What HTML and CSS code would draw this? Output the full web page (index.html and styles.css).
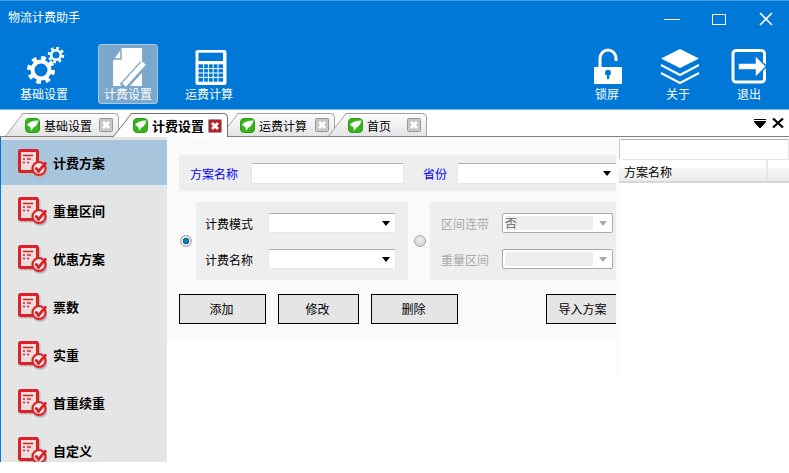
FILE: index.html
```html
<!DOCTYPE html>
<html lang="zh-CN">
<head>
    <meta charset="UTF-8">
    <title>物流计费助手</title>
    <link rel="stylesheet" href="styles.css">
</head>
<body>
<svg class="defs" width="0" height="0">
    <symbol id="tabLeaf" viewBox="0 0 15 15">
        <rect x="0.500" y="0.500" width="14" height="14" rx="3.500" fill="#37b31c" stroke="#2f9a16"/>
        <path d="M2 7C4.500 3.500 9 2.500 13.500 2.500C12.500 6.500 10.500 9 8.500 9.500L6 13L5.500 9.500C4.500 8.500 3 7.500 2 7z" fill="#fff"/>
    </symbol>
    <symbol id="sideDoc" viewBox="0 0 30 30">
        <rect x="2.500" y="3.500" width="21" height="23" rx="1" fill="#bbb"/>
        <circle cx="23" cy="22.500" r="7.500" fill="#bdb2b2"/>
        <rect x="2.500" y="2.500" width="18" height="21" rx="1" fill="#f1dcdc" stroke="#d8232a" stroke-width="3"/>
        <path d="M6 7.500H16M6 11H8M10 11H14M6 14.500H8M10 14.500H12" stroke="#d8232a" stroke-width="1.600"/>
        <circle cx="22" cy="20.500" r="6.500" fill="#efe9e9" stroke="#d8232a" stroke-width="2.200"/>
        <path d="M18.500 19.500L21.500 23.500L29 14.500" fill="none" stroke="#d8232a" stroke-width="2.800"/>
    </symbol>
    <symbol id="closeBox" viewBox="0 0 14 14">
        <rect x="0.500" y="0.500" width="13" height="13" rx="1" fill="currentColor" stroke="#999"/>
        <path d="M4 4L10 10M10 4L4 10" stroke="#fff" stroke-width="2.800"/>
    </symbol>
</svg>

<div class="window">
    <header class="head">
        <div class="titleRow">
            <span class="appTitle">物流计费助手</span>
            <div class="winBtns">
                <div class="winBtn"><svg width="16" height="16"><path d="M0 8.500H16" stroke="#fff"/></svg></div>
                <div class="winBtn"><svg width="16" height="16"><rect x="1.500" y="3.500" width="13" height="10" fill="none" stroke="#fff"/></svg></div>
                <div class="winBtn"><svg width="16" height="16"><path d="M2 2L14 14M14 2L2 14" stroke="#fff" stroke-width="1.600"/></svg></div>
            </div>
        </div>
        <div class="toolbar">
            <div class="toolGroup toolGroupLeft">
                <div class="tool">
                    <svg width="44" height="40" viewBox="0 0 44 40" fill="none" stroke="#fff">
                        <circle cx="19" cy="23" r="8.500" stroke-width="4"/>
                        <circle cx="19" cy="23" r="12" stroke-width="4" stroke-dasharray="4.700 4.700"/>
                        <circle cx="34" cy="8" r="4.800" stroke-width="2.600"/>
                        <circle cx="34" cy="8" r="7" stroke-width="2.600" stroke-dasharray="2.750 2.750"/>
                    </svg>
                    <span>基础设置</span>
                </div>
                <div class="tool toolActive">
                    <svg width="44" height="40" viewBox="0 0 44 40">
                        <path d="M16 1H36V39H7V14z" fill="#fff"/>
                        <path d="M15 3V12H7" fill="none" stroke="#7ba7cc" stroke-width="1.500"/>
                        <path d="M38 17L17 40" stroke="#7ba7cc" stroke-width="9"/>
                        <path d="M38 16L18 38" stroke="#fff" stroke-width="5"/>
                    </svg>
                    <span>计费设置</span>
                </div>
                <div class="tool toolCalc">
                    <svg width="44" height="40" viewBox="0 0 44 40">
                        <rect x="8.500" y="3" width="31" height="35" rx="2" fill="#fff"/>
                        <rect x="11.500" y="5.700" width="24.500" height="8.300" fill="#0078d7"/>
                        <rect x="11.500" y="17.300" width="24.500" height="17.400" fill="#0078d7"/>
                        <path d="M16.600 17V35M21.400 17V35M26.200 17V35M31 17V35M11 21.600H36M11 26H36M11 30.400H36" stroke="#fff"/>
                    </svg>
                    <span>运费计算</span>
                </div>
            </div>
            <div class="toolGroup">
                <div class="tool">
                    <svg width="44" height="40" viewBox="0 0 44 40">
                        <path d="M15 21V11.500a8 8.500 0 0 1 16 0V14" fill="none" stroke="#fff" stroke-width="3"/>
                        <rect x="9" y="20" width="28" height="17" rx="1" fill="#fff"/>
                        <circle cx="23" cy="25.700" r="3" fill="#0078d7"/>
                        <rect x="22" y="26" width="2.200" height="6" fill="#0078d7"/>
                    </svg>
                    <span>锁屏</span>
                </div>
                <div class="tool">
                    <svg width="44" height="40" viewBox="0 0 44 40">
                        <path d="M24 2L43 11.500L24 21L5 11.500z" fill="#fff"/>
                        <path d="M5 18L24 28L43 18M5 26L24 36L43 26" fill="none" stroke="#fff" stroke-width="2"/>
                    </svg>
                    <span>关于</span>
                </div>
                <div class="tool">
                    <svg width="44" height="40" viewBox="0 0 44 40">
                        <rect x="6" y="3.500" width="31.500" height="31.500" rx="3" fill="none" stroke="#fff" stroke-width="3"/>
                        <path d="M11 16H28V8L39.500 19.500L28 31V23H11z" fill="#fff" stroke="#0078d7" stroke-width="1.500"/>
                    </svg>
                    <span>退出</span>
                </div>
            </div>
        </div>
    </header>

    <div class="tabStrip">
        <div class="tab tabOne">
            <svg class="tabIcon"><use href="#tabLeaf"/></svg><span>基础设置</span>
            <svg class="tabClose"><use href="#closeBox"/></svg>
        </div>
        <div class="tab tabTwo tabActive">
            <svg class="tabIcon"><use href="#tabLeaf"/></svg><span>计费设置</span>
            <svg class="tabClose"><use href="#closeBox"/></svg>
        </div>
        <div class="tab tabThree">
            <svg class="tabIcon"><use href="#tabLeaf"/></svg><span>运费计算</span>
            <svg class="tabClose"><use href="#closeBox"/></svg>
        </div>
        <div class="tab tabFour">
            <svg class="tabIcon"><use href="#tabLeaf"/></svg><span>首页</span>
            <svg class="tabClose"><use href="#closeBox"/></svg>
        </div>
        <div class="tabTools">
            <svg width="12" height="9"><path d="M0 0.500H12M0 2.500H12L6 9z" fill="#000" stroke="#000" stroke-width="1"/></svg>
            <svg width="12" height="10"><path d="M1 0.500L11 9.500M11 0.500L1 9.500" stroke="#000" stroke-width="2.200"/></svg>
        </div>
    </div>

    <div class="body">
        <nav class="side">
            <div class="sideItem sideActive"><svg class="sideIcon"><use href="#sideDoc"/></svg>计费方案</div>
            <div class="sideItem"><svg class="sideIcon"><use href="#sideDoc"/></svg>重量区间</div>
            <div class="sideItem"><svg class="sideIcon"><use href="#sideDoc"/></svg>优惠方案</div>
            <div class="sideItem"><svg class="sideIcon"><use href="#sideDoc"/></svg>票数</div>
            <div class="sideItem"><svg class="sideIcon"><use href="#sideDoc"/></svg>实重</div>
            <div class="sideItem"><svg class="sideIcon"><use href="#sideDoc"/></svg>首重续重</div>
            <div class="sideItem"><svg class="sideIcon"><use href="#sideDoc"/></svg>自定义</div>
        </nav>

        <main class="content">
            <div class="nameRow">
                <label class="blueLabel">方案名称</label>
                <input class="nameInput" type="text">
                <label class="blueLabel provLabel">省份</label>
                <div class="combo provCombo"><i class="caret"></i></div>
            </div>
            <div class="modeRow">
                <span class="radio radioOn"></span>
                <div class="modeBox">
                    <div class="modeLine"><label>计费模式</label><div class="combo"><i class="caret"></i></div></div>
                    <div class="modeLine"><label>计费名称</label><div class="combo"><i class="caret"></i></div></div>
                </div>
                <span class="radio"></span>
                <div class="modeBox modeOff">
                    <div class="modeLine"><label>区间连带</label><div class="combo comboOff"><span class="comboVal">否</span><i class="caret"></i></div></div>
                    <div class="modeLine"><label>重量区间</label><div class="combo comboOff"><span class="comboVal"></span><i class="caret"></i></div></div>
                </div>
            </div>
            <div class="btnRow">
                <button class="btn btnWide">添加</button>
                <button class="btn btnMid">修改</button>
                <button class="btn btnWide">删除</button>
                <button class="btn btnImport">导入方案</button>
            </div>
        </main>

        <div class="splitter"></div>

        <aside class="panel">
            <input class="searchBox" type="text">
            <div class="gridHead">
                <span class="gridCol">方案名称</span>
                <span class="gridRest"></span>
            </div>
        </aside>
    </div>
</div>
</body>
</html>
```

FILE: styles.css
```css
html, body {
    margin: 0;
    background: #fff;
}
body {
    font-family: "Noto Sans CJK SC", "Liberation Sans", sans-serif;
    font-size: 12px;
    color: #000;
    overflow: hidden;
}
.defs {
    position: absolute;
}
.window {
    width: 789px;
    height: 462px;
    display: flex;
    flex-direction: column;
    overflow: hidden;
}

/* header */
.head {
    height: 110px;
    box-sizing: border-box;
    flex: none;
    background: #0078d7;
    border-top: 1px solid #4a9fe3;
    border-bottom: 1px solid #7fb6e6;
    color: #fff;
}
.titleRow {
    height: 43px;
    display: flex;
    justify-content: space-between;
}
.appTitle {
    padding-left: 8px;
    line-height: 31px;
}
.winBtns {
    display: flex;
}
.winBtn {
    width: 47px;
    height: 36px;
    display: flex;
    align-items: center;
    justify-content: center;
}
.toolbar {
    display: flex;
    justify-content: space-between;
    padding: 0 10px 0 14px;
}
.toolGroup {
    display: flex;
    gap: 11px;
}
.toolGroupLeft {
    gap: 24px;
}
.tool {
    width: 60px;
    height: 60px;
    box-sizing: border-box;
    padding-top: 2px;
    border: 1px solid transparent;
    border-radius: 3px;
    display: flex;
    flex-direction: column;
    align-items: center;
}
.tool svg {
    flex: none;
}
.tool span {
    line-height: 15px;
    margin-top: -1px;
}
.toolCalc {
    margin-left: -3px;
}
.toolActive {
    background: #7ba7cc;
    border-color: #a9c8e2;
}

/* tabs */
.tabStrip {
    height: 27px;
    box-sizing: border-box;
    flex: none;
    display: flex;
    align-items: flex-end;
    padding-left: 24px;
    border-bottom: 1px solid #808080;
}
.tab {
    position: relative;
    height: 23px;
    box-sizing: border-box;
    display: flex;
    align-items: center;
    padding-left: 1px;
    background: linear-gradient(#fdfdfd, #e4e4e4);
    border-top: 1px solid #a0a0a0;
    border-right: 1px solid #a0a0a0;
    border-radius: 0 5px 0 0;
}
.tab::before {
    content: "";
    position: absolute;
    left: -10px;
    top: -1px;
    bottom: 0;
    width: 20px;
    background: linear-gradient(#fdfdfd, #e4e4e4);
    border-left: 1px solid #a0a0a0;
    border-top: 1px solid #a0a0a0;
    transform: skewX(-38deg);
}
.tab > * {
    position: relative;
}
.tabOne {
    width: 95px;
}
.tabTwo {
    width: 96px;
    margin-left: 13px;
}
.tabThree {
    width: 96px;
    margin-left: 11px;
}
.tabFour {
    width: 80px;
    margin-left: 12px;
}
.tabActive {
    z-index: 2;
    height: 24px;
    margin-bottom: -1px;
    background: #fff;
    border-color: #707070;
    font-size: 13px;
    font-weight: bold;
}
.tabActive::before {
    background: #fff;
    border-color: #707070;
}
.tabIcon {
    width: 15px;
    height: 15px;
    flex: none;
    margin-right: 4px;
}
.tabClose {
    width: 14px;
    height: 14px;
    flex: none;
    margin-left: auto;
    margin-right: 5px;
    color: #c6c6c6;
}
.tabActive .tabClose {
    color: #b82228;
}
.tabTools {
    margin-left: auto;
    height: 26px;
    display: flex;
    align-items: center;
    gap: 6px;
    padding-right: 5px;
}

/* body */
.body {
    flex: 1;
    min-height: 0;
    display: flex;
    align-items: flex-start;
    border-left: 1px solid #0078d7;
}
.side {
    width: 166px;
    height: 100%;
    flex: none;
    box-sizing: border-box;
    padding-top: 3px;
    background: #e5e5e5;
    display: flex;
    flex-direction: column;
    gap: 3px;
    overflow: hidden;
}
.sideItem {
    height: 45px;
    flex: none;
    display: flex;
    align-items: center;
    gap: 6px;
    padding-left: 16px;
    font-size: 13px;
    font-weight: bold;
}
.sideActive {
    background: #a7c6dd;
}
.sideIcon {
    width: 30px;
    height: 30px;
    flex: none;
}

/* form */
.content {
    width: 449px;
    height: 203px;
    flex: none;
    box-sizing: border-box;
    padding: 18px 0 0 12px;
    background: #fafafa;
    overflow: hidden;
}
.nameRow {
    width: 437px;
    height: 36px;
    box-sizing: border-box;
    display: flex;
    align-items: center;
    padding-left: 11px;
    background: #eee;
    overflow: hidden;
}
.blueLabel {
    color: #0000ff;
    flex: none;
}
.nameInput {
    width: 153px;
    height: 21px;
    box-sizing: border-box;
    margin: 0 0 0 13px;
    padding: 0;
    flex: none;
    background: #fff;
    border: 1px solid #e2e6ee;
    border-top-color: #b0b0b0;
    border-radius: 2px;
}
.provLabel {
    margin-left: 19px;
    margin-right: 10px;
}
.combo {
    width: 128px;
    height: 20px;
    box-sizing: border-box;
    flex: none;
    display: flex;
    align-items: center;
    justify-content: space-between;
    padding: 0 3px 0 2px;
    background: #fff;
    border: 1px solid #e2e6ee;
    border-top-color: #b0b0b0;
    border-radius: 2px;
}
.provCombo {
    width: 160px;
    height: 21px;
    justify-content: flex-end;
    padding-right: 3px;
}
.caret {
    width: 0;
    height: 0;
    margin-left: auto;
    border: 4px solid transparent;
    border-top: 5px solid #000;
    border-bottom: 0;
    margin-right: 2px;
}
.modeRow {
    width: 437px;
    height: 78px;
    margin-top: 11px;
    display: flex;
    align-items: center;
    overflow: hidden;
}
.radio {
    width: 12px;
    height: 12px;
    box-sizing: border-box;
    flex: none;
    margin: 0 4px 0 1px;
    border: 1px solid #a8a8a8;
    border-radius: 50%;
    background: radial-gradient(circle at 50% 40%, #f2f2f2, #c8c8c8);
}
.radioOn {
    background: radial-gradient(circle closest-side, #1a8fd6 0, #0a5f9c 62%, #ececec 68%, #d6d6d6 100%);
}
.modeBox {
    width: 212px;
    height: 78px;
    box-sizing: border-box;
    flex: none;
    padding: 11px 12px 11px 9px;
    background: #eee;
    display: flex;
    flex-direction: column;
    gap: 16px;
    margin-right: 5px;
}
.modeLine {
    display: flex;
    align-items: center;
    justify-content: space-between;
}
.modeOff {
    width: 186px;
    margin-right: 0;
    padding: 11px 3px 11px 11px;
    color: #a9a9a9;
}
.modeOff .combo {
    width: 111px;
}
.comboOff {
    border: 1px solid #aaa;
}
.comboOff .caret {
    border-top-color: #aaa;
}
.comboVal {
    width: 88px;
    height: 14px;
    line-height: 13px;
    background: #eee;
    color: #666;
}
.btnRow {
    width: 470px;
    margin-top: 14px;
    display: flex;
    gap: 12px;
}
.btn {
    height: 30px;
    box-sizing: border-box;
    flex: none;
    padding: 0 2px 1px 0;
    font: inherit;
    color: #000;
    background: #e5e5e5;
    border: 1px solid #000;
}
.btnWide {
    width: 87px;
}
.btnMid {
    width: 81px;
}
.btnImport {
    width: 75px;
    margin-left: 76px;
}

/* right side list */
.splitter {
    width: 3px;
    height: 241px;
    flex: none;
    background: #fafafa;
}
.panel {
    flex: 1;
    min-width: 0;
    padding-top: 2px;
}
.searchBox {
    display: block;
    width: 100%;
    height: 21px;
    box-sizing: border-box;
    margin: 0;
    padding: 0;
    background: #fff;
    border: 1px solid #e6e6e6;
    border-top-color: #b4b4b4;
    border-left-color: #c8c8c8;
    border-radius: 2px 0 0 2px;
}
.gridHead {
    height: 23px;
    box-sizing: border-box;
    display: flex;
    background: linear-gradient(#fff 0, #fff 36%, #f5f5f5 40%, #ececee 100%);
    border-bottom: 2px solid #d8d8d8;
}
.gridCol {
    width: 149px;
    box-sizing: border-box;
    padding-left: 5px;
    line-height: 24px;
    border-right: 2px solid #e6e6e6;
}
```
